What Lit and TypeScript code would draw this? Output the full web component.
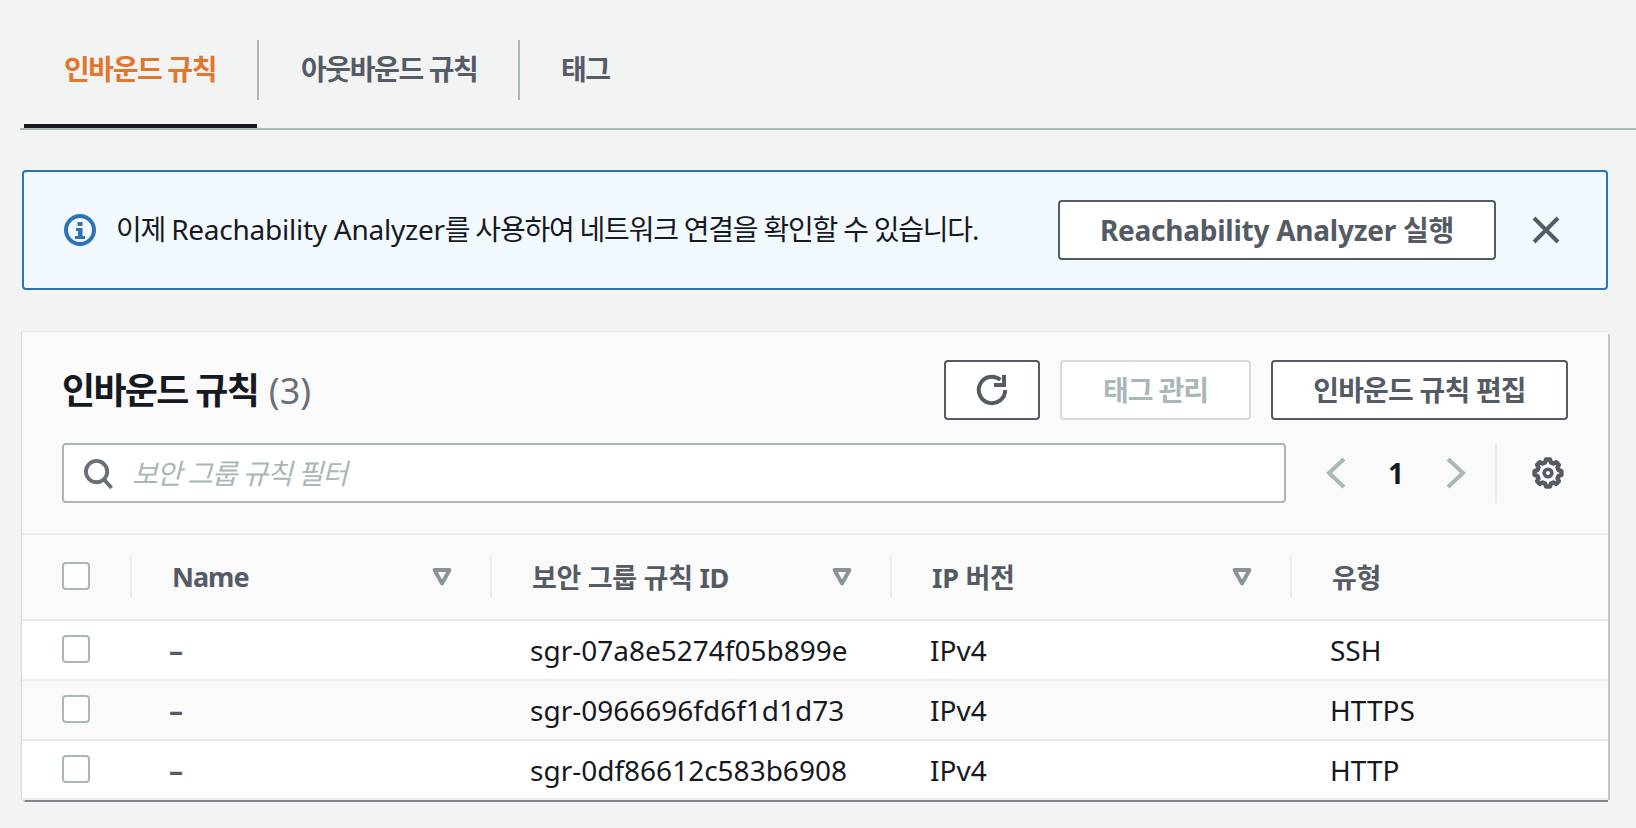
import { LitElement, html, css, svg } from "lit";
import { customElement } from "lit/decorators.js";

function gearPath(): string {
  const pts: string[] = [];
  const n = 8;
  for (let i = 0; i < n; i++) {
    const a = (i / n) * Math.PI * 2 - Math.PI / 2;
    const step = (Math.PI * 2) / n;
    const add = (r: number, o: number) =>
      pts.push(`${(8 + r * Math.cos(a + o * step)).toFixed(2)} ${(8 + r * Math.sin(a + o * step)).toFixed(2)}`);
    add(5.5, -0.34);
    add(6.8, -0.18);
    add(6.8, 0.18);
    add(5.5, 0.34);
  }
  return "M" + pts.join("L") + "Z";
}

const filterIcon = html`<svg class="filter" viewBox="0 0 20 18"><path d="M2.5 2h15L10 15.5z"></path></svg>`;
const check = html`<span class="check"></span>`;

const rows = [
  ["sgr-07a8e5274f05b899e", "IPv4", "SSH"],
  ["sgr-0966696fd6f1d1d73", "IPv4", "HTTPS"],
  ["sgr-0df86612c583b6908", "IPv4", "HTTP"],
];

@customElement("app-root")
export class AppRoot extends LitElement {
  static styles = css`
    :host {
      display: block;
      width: 1636px;
      height: 828px;
      overflow: hidden;
      background: #f2f3f3;
      color: #16191f;
      font-family: "Noto Sans", "Noto Sans CJK KR", sans-serif;
      font-size: 28px;
      box-sizing: border-box;
    }
    * { box-sizing: border-box; }
    .tabs {
      display: flex;
      margin-left: 20px;
      height: 130px;
      padding: 40px 0 0 4px;
      border-bottom: 2px solid #aab7b8;
    }
    .tab {
      height: 60px;
      display: flex;
      align-items: center;
      padding: 0 40px 4px;
      font-weight: 700;
      font-size: 28px;
      letter-spacing: -1.4px;
      color: #545b64;
      border-right: 2px solid #aab7b8;
      position: relative;
      white-space: nowrap;
    }
    .tab:last-child { border-right: 0; padding-left: 41px; }
    .tab.active { color: #e0762f; width: 235px; }
    .tab.active::after {
      content: "";
      position: absolute;
      left: 0;
      right: 0;
      top: 84px;
      height: 4px;
      background: #16191f;
    }
    .tab.second { width: 261px; padding-left: 42px; }
    .banner {
      margin: 40px 0 0 22px;
      width: 1586px;
      height: 120px;
      border: 2px solid #2f72b8;
      border-radius: 4px;
      background: #f1f8fe;
      display: flex;
      align-items: center;
      padding: 0 44px 0 40px;
    }
    .info { width: 32px; height: 32px; flex: none; margin-right: 20px; }
    .banner .msg { flex: 1; white-space: nowrap; letter-spacing: -1.22px; padding-bottom: 4px; }
    .lat { letter-spacing: -0.25px; }
    .btn {
      height: 60px;
      border: 2px solid #545b64;
      border-radius: 4px;
      background: #fff;
      color: #545b64;
      font-weight: 700;
      display: flex;
      align-items: center;
      justify-content: center;
      white-space: nowrap;
      flex: none;
      padding-bottom: 2px;
      letter-spacing: -0.8px;
    }
    .btn.run { width: 438px; margin-right: 34px; letter-spacing: -0.25px; }
    .close { width: 32px; height: 32px; flex: none; }
    .card {
      margin: 42px 0 0 22px;
      width: 1586px;
      height: 468px;
      background: #fafafa;
      box-shadow: 0 2px 1px -0.5px rgba(84, 91, 100, 0.7), 2px 0 1px -0.5px rgba(0, 28, 36, 0.2), -1px 0 1px 0 rgba(0, 28, 36, 0.1), 0 -1px 1px 0 rgba(0, 28, 36, 0.03);
    }
    .head { height: 201px; padding: 28px 40px 0 40px; }
    .titlebar { display: flex; align-items: center; height: 60px; }
    .title { flex: 1; font-size: 36px; font-weight: 700; letter-spacing: -1.7px; white-space: nowrap; padding-bottom: 4px; }
    .title .count { font-weight: 400; color: #687078; letter-spacing: 0; font-size: 36px; margin-left: 3px; }
    .refresh { width: 96px; margin-right: 20px; padding-bottom: 0; }
    .refresh svg { width: 32px; height: 32px; }
    .disabled { width: 191px; margin-right: 20px; border-color: #d5dbdb; color: #aab7b8; letter-spacing: -1.1px; }
    .edit { width: 297px; }
    .toolbar { display: flex; align-items: center; height: 60px; margin-top: 23px; }
    .search {
      width: 1224px;
      height: 60px;
      border: 2px solid #aab7b8;
      border-radius: 4px;
      background: #fff;
      display: flex;
      align-items: center;
      padding-left: 19px;
      flex: none;
    }
    .search svg { width: 31px; height: 31px; margin-right: 18px; }
    .search span { color: #aab7b8; font-style: italic; letter-spacing: -1.2px; white-space: nowrap; padding-bottom: 3px; }
    .pager { display: flex; align-items: center; margin-left: 40px; height: 60px; }
    .chev { width: 20px; height: 32px; flex: none; }
    .num { width: 100px; text-align: center; font-weight: 700; }
    .sep { width: 2px; height: 60px; background: #eaeded; margin-left: 29px; }
    .gear { width: 32px; height: 32px; margin-left: 35px; }
    .thead, .row {
      display: grid;
      grid-template-columns: 108px 360px 400px 400px 1fr;
      border-top: 2px solid #eaeded;
    }
    .thead { height: 86px; color: #545b64; font-weight: 700; font-size: 27px; }
    .row { height: 60px; background: #fff; }
    .row.alt { background: #fafafa; }
    .row:last-child { height: 61px; border-bottom: 2px solid #eaeded; }
    .th {
      display: flex;
      align-items: center;
      height: 42px;
      margin-top: 21px;
      padding: 0 38px 0 40px;
      border-left: 2px solid #eaeded;
      justify-content: space-between;
      letter-spacing: -0.3px;
      white-space: nowrap;
    }
    .th .latin { letter-spacing: -1px; }
    .th span:not(.check) { padding-bottom: 2px; }
    .th:first-child { border-left: 0; padding: 0 0 2px 40px; }
    .td {
      display: flex;
      align-items: center;
      padding-left: 40px;
      white-space: nowrap;
    }
    .td:first-child { padding-bottom: 2px; }
    .dash { color: #545b64; font-weight: 700; padding-left: 39px; }
    .check {
      display: block;
      width: 28px;
      height: 28px;
      border: 2px solid #aab7b8;
      border-radius: 4px;
      background: #fff;
    }
    .filter { width: 20px; height: 18px; flex: none; }
    .filter path { fill: none; stroke: #879596; stroke-width: 3.8; stroke-linejoin: round; }
    svg { display: block; overflow: visible; }
  `;

  render() {
    return html`
      <div class="tabs">
        <div class="tab active">인바운드 규칙</div>
        <div class="tab second">아웃바운드 규칙</div>
        <div class="tab">태그</div>
      </div>
      <div class="banner">
        <svg class="info" viewBox="0 0 32 32">
          <circle cx="16" cy="16" r="14" fill="none" stroke="#2f72b8" stroke-width="4"></circle>
          <rect x="13.5" y="8" width="5" height="4" fill="#2f72b8"></rect>
          <path d="M12 14h6.5v8H21v3H11v-3h3v-5h-2z" fill="#2f72b8"></path>
        </svg>
        <div class="msg">이제 <span class="lat">Reachability Analyzer</span>를 사용하여 네트워크 연결을 확인할 수 있습니다.</div>
        <div class="btn run">Reachability Analyzer 실행</div>
        <svg class="close" viewBox="0 0 32 32"><path d="M4 4l24 24M28 4L4 28" fill="none" stroke="#545b64" stroke-width="4"></path></svg>
      </div>
      <div class="card">
        <div class="head">
          <div class="titlebar">
            <div class="title">인바운드 규칙 <span class="count">(3)</span></div>
            <div class="btn refresh">
              <svg viewBox="0 0 16 16" fill="none" stroke="#545b64" stroke-width="2">
                <path d="M14.6 8a6.6 6.6 0 1 1-2.4-5.1"></path>
                <path d="M14 .5v5H9"></path>
              </svg>
            </div>
            <div class="btn disabled">태그 관리</div>
            <div class="btn edit">인바운드 규칙 편집</div>
          </div>
          <div class="toolbar">
            <div class="search">
              <svg viewBox="0 0 32 32" fill="none" stroke="#687078">
                <circle cx="14" cy="14" r="11" stroke-width="4"></circle>
                <path d="M21.5 22l8 9" stroke-width="4"></path>
              </svg>
              <span>보안 그룹 규칙 필터</span>
            </div>
            <div class="pager">
              <svg class="chev" viewBox="0 0 20 32"><path d="M18 2L3 16l15 14" fill="none" stroke="#aab7b8" stroke-width="4"></path></svg>
              <div class="num">1</div>
              <svg class="chev" viewBox="0 0 20 32"><path d="M2 2l15 14L2 30" fill="none" stroke="#aab7b8" stroke-width="4"></path></svg>
              <div class="sep"></div>
              <svg class="gear" viewBox="0 0 16 16" fill="none" stroke="#545b64" stroke-width="2.2" stroke-linejoin="round">
                ${svg`<path d=${gearPath()}></path><circle cx="8" cy="8" r="1.9" stroke-width="1.8"></circle>`}
              </svg>
            </div>
          </div>
        </div>
        <div class="thead">
          <div class="th">${check}</div>
          <div class="th"><span class="latin">Name</span>${filterIcon}</div>
          <div class="th"><span>보안 그룹 규칙 ID</span>${filterIcon}</div>
          <div class="th"><span>IP 버전</span>${filterIcon}</div>
          <div class="th"><span>유형</span></div>
        </div>
        ${rows.map(
          (r, i) => html`<div class="row ${i === 1 ? "alt" : ""}">
            <div class="td">${check}</div>
            <div class="td dash">–</div>
            <div class="td">${r[0]}</div>
            <div class="td">${r[1]}</div>
            <div class="td">${r[2]}</div>
          </div>`
        )}
      </div>
    `;
  }
}
